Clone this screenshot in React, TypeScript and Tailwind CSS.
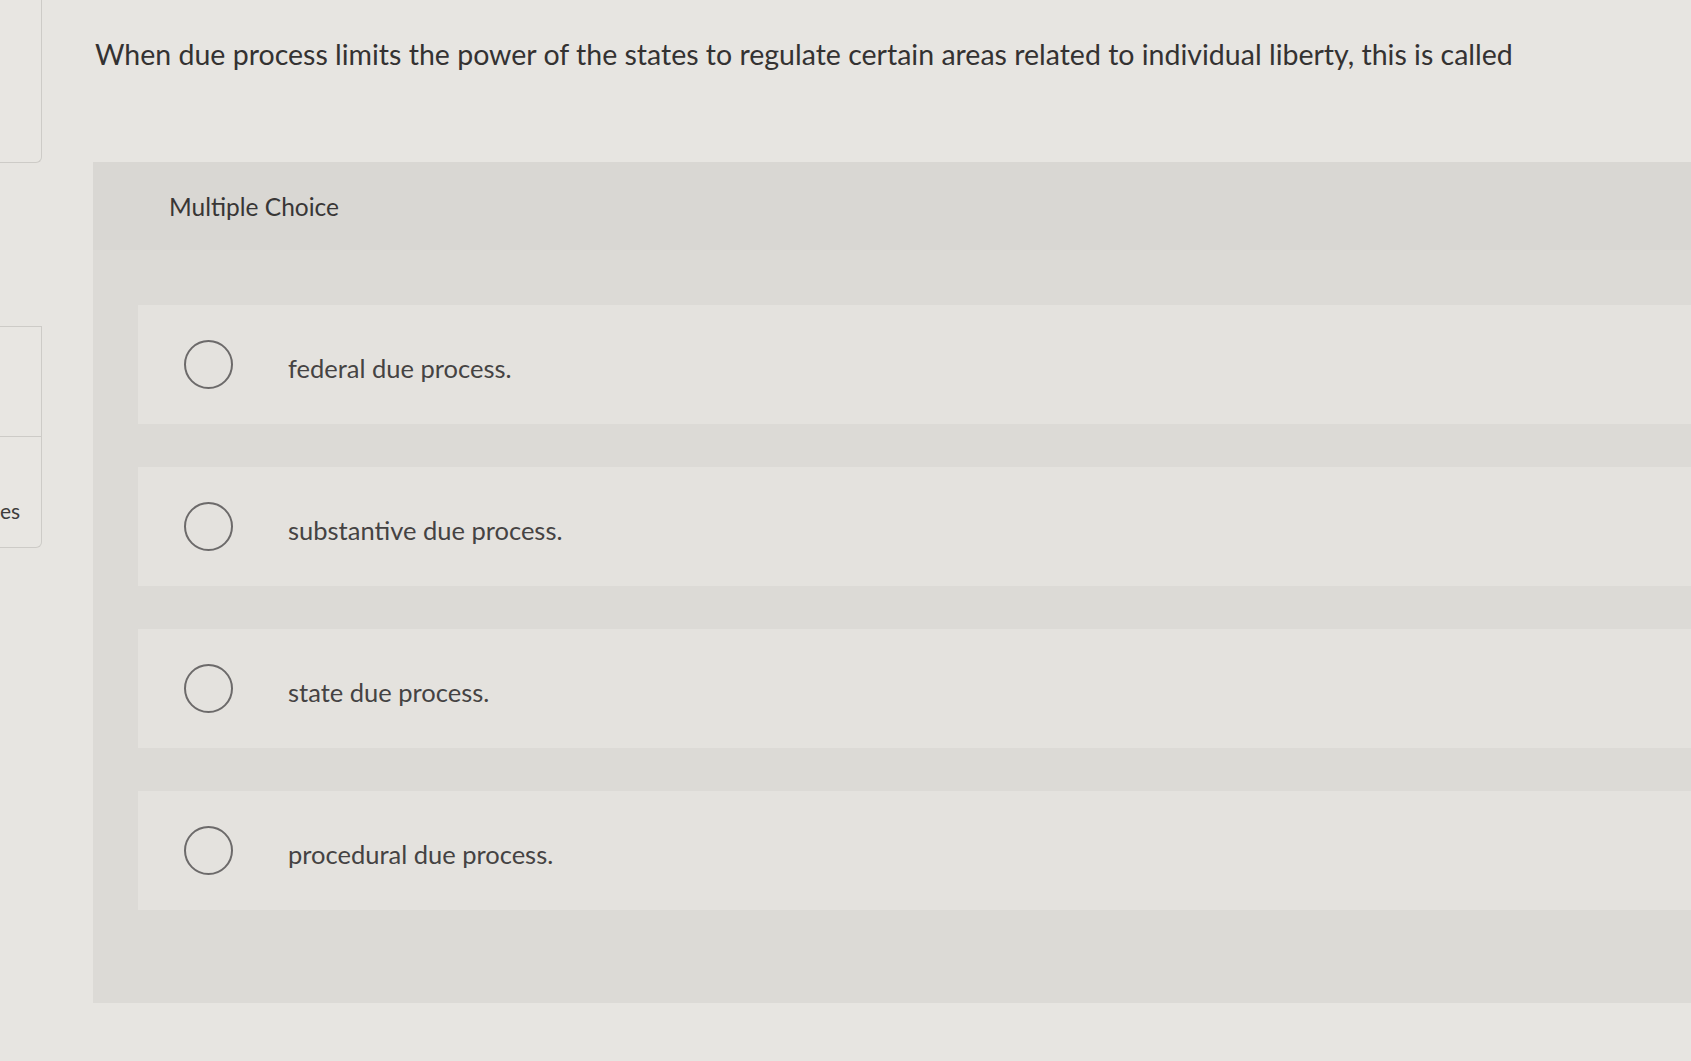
const options = [
  "federal due process.",
  "substantive due process.",
  "state due process.",
  "procedural due process.",
];

const Sidebar = () => (
  <aside className="flex w-[42px] shrink-0 flex-col">
    <div className="h-[163px] rounded-br-[6px] border-r border-b border-[#cdcbc7] bg-[#e8e6e2]" />
    <div className="mt-[163px] flex h-[222px] flex-col rounded-br-[6px] border-t border-r border-b border-[#cdcbc7] bg-[#e8e6e2]">
      <div className="h-[110px] border-b border-[#cdcbc7]" />
      <div className="pt-[62px] text-[21px] leading-[24px] text-[#3e3c3c]">es</div>
    </div>
  </aside>
);

const Option = ({ label }: { label: string }) => (
  <div className="flex h-[119px] items-center bg-[#e4e2de] pl-[46px]">
    <span className="h-[49px] w-[49px] shrink-0 rounded-full border-2 border-[#6c6a6a]" />
    <span className="ml-[55px] pt-[6px] text-[25.5px] leading-[30px] text-[#454343]">{label}</span>
  </div>
);

export default function App() {
  return (
    <div className="flex h-[1061px] w-full overflow-hidden bg-[#e7e5e1] font-['Lato','Open_Sans',sans-serif]">
      <Sidebar />
      <main className="ml-[51px] min-w-0 flex-1">
        <div className="h-[162px] pt-[37px] pl-[2px]">
          <h1 className="whitespace-nowrap text-[28.5px] leading-[34px] text-[#343232]">
            When due process limits the power of the states to regulate certain areas related to individual
            liberty, this is called
          </h1>
        </div>

        <section className="bg-[#dcdad6]">
          <div className="flex h-[88px] items-center bg-[#d9d7d3] pl-[76px]">
            <h2 className="pt-[2px] text-[24.5px] leading-[30px] text-[#383636]">Multiple Choice</h2>
          </div>
          <div className="flex flex-col gap-[43px] pt-[55px] pb-[93px] pl-[45px]">
            {options.map((o) => (
              <Option key={o} label={o} />
            ))}
          </div>
        </section>
      </main>
    </div>
  );
}
